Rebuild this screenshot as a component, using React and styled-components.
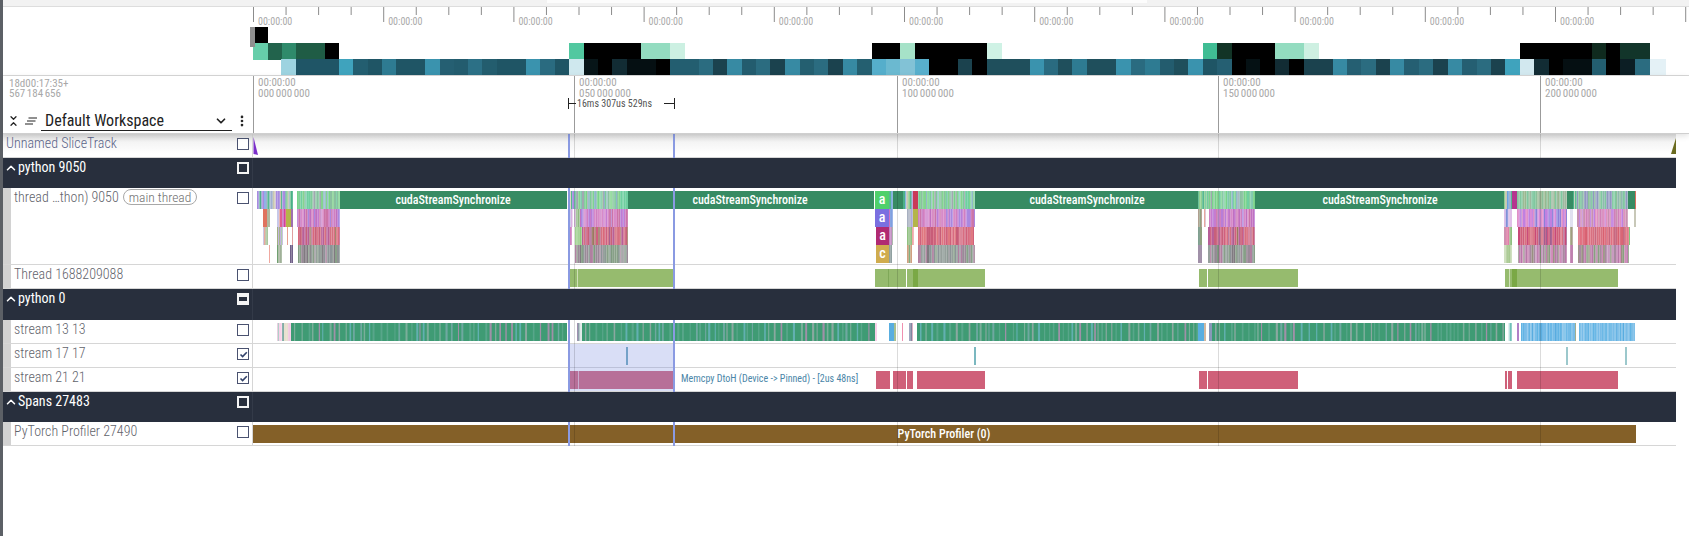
import React from 'react'
import styled, { createGlobalStyle } from 'styled-components'
import { ChevronUp, ChevronDown, MoreVertical } from 'lucide-react'

const GlobalStyle = createGlobalStyle`
  html, body {
    margin: 0;
    padding: 0;
    background: #fff;
    overflow: hidden;
    font-family: Roboto, "Liberation Sans", sans-serif;
    font-stretch: 75%;
  }
`

const LEFT = 253
const RIGHT = 1676
const WIDTH = RIGHT - LEFT

function rng(seed) {
  let s = seed
  return () => {
    s = (s * 16807) % 2147483647
    return s / 2147483647
  }
}

// thin slices, under 2px each, the way a zoomed out flame chart looks
function stripes(x0, x1, palette, seed, y, h) {
  const r = rng(seed * 7919)
  const out = []
  let x = x0
  while (x < x1) {
    const w = Math.min(0.7 + r() * 1.6, x1 - x)
    out.push({ x, w, y, h, fill: palette[Math.floor(r() * palette.length)] })
    x += w
  }
  return out
}

// solid run with thin lighter lines, like the stream tracks
function barcode(x0, x1, base, lines, seed, y, h) {
  const r = rng(seed * 7919)
  const out = [{ x: x0, w: x1 - x0, y, h, fill: base }]
  let x = x0 + 3
  while (x < x1 - 1) {
    out.push({ x, w: 1 + r() * 1.2, y, h, fill: lines[Math.floor(r() * lines.length)] })
    x += 3 + r() * 5
  }
  return out
}

function Rects({ items }) {
  return items.map((s, i) => <rect key={i} x={s.x} y={s.y} width={s.w} height={s.h} fill={s.fill} />)
}

const Page = styled.div`
  display: flex;
  width: 1689px;
  height: 536px;
  overflow: hidden;
`
const LeftEdge = styled.div`
  width: 3px;
  flex: none;
  background: #5c6066;
`
const Main = styled.div`
  flex: 1;
  min-width: 0;
`
const TopBar = styled.div`
  height: 7px;
  display: flex;
  box-sizing: border-box;
  background: #f2f2f2;
  border-bottom: 1px solid #dddddd;
`
const TopTab = styled.div`
  width: 600px;
  height: 3px;
  margin-left: 544px;
  background: #fcfcfc;
`
const Overview = styled.div`
  height: 69px;
  display: flex;
  box-sizing: border-box;
  border-bottom: 1px solid #d8d8d8;
`
const Blank = styled.div`
  width: 250px;
  flex: none;
`
const OverviewBody = styled.div`
  position: relative;
  flex: 1;
  height: 68px;
`
const Handle = styled.div`
  position: absolute;
  left: -3px;
  top: 20px;
  width: 5px;
  height: 20px;
  background: #8f8f8f;
`
const TickLabel = styled.span`
  position: absolute;
  top: 9px;
  left: ${p => p.$x + 5}px;
  color: #aaaaaa;
  font-size: 10px;
  line-height: 12px;
`
const Drawing = styled.svg`
  position: absolute;
  left: 0;
  top: 0;
  display: block;
`

const Header = styled.div`
  display: flex;
  height: 58px;
  box-sizing: border-box;
  border-bottom: 1px solid #cfcfcf;
  box-shadow: 0 2px 6px rgba(0, 0, 0, 0.12);
  position: relative;
  z-index: 3;
  background: #fff;
`
const HeaderLeft = styled.div`
  width: 250px;
  flex: none;
  display: flex;
  flex-direction: column;
  justify-content: space-between;
  box-sizing: border-box;
  padding: 3px 0 2px 6px;
`
const Clock = styled.div`
  color: #a8a8a8;
  font-size: 11px;
  line-height: 10px;
  word-spacing: -1px;
`
const WorkspaceRow = styled.div`
  display: flex;
  align-items: center;
  height: 20px;
`
const ExpandIcon = styled.div`
  width: 10px;
  height: 12px;
  margin-left: -1px;
  display: flex;
  flex-direction: column;
  align-items: center;
  justify-content: center;
  color: #222;
  svg {
    margin: -2px 0;
  }
`
const WorkspaceIcon = styled.svg`
  margin-left: 7px;
  width: 12px;
  height: 8px;
  flex: none;
`
const Select = styled.div`
  display: flex;
  align-items: center;
  justify-content: space-between;
  width: 191px;
  height: 20px;
  margin-left: 4px;
  padding: 0 4px;
  box-sizing: border-box;
  border-bottom: 1px solid #222;
  color: #222;
  font-size: 16px;
`
const Dots = styled.div`
  display: flex;
  margin-left: 3px;
  color: #222;
`
const HeaderBody = styled.div`
  position: relative;
  flex: 1;
  border-left: 1px solid #9b9b9b;
`
const Mark = styled.div`
  position: absolute;
  left: ${p => p.$x - 1}px;
  top: 0;
  bottom: 0;
  width: 1px;
  background: #9b9b9b;
`
const MarkLabel = styled.div`
  position: absolute;
  left: ${p => p.$x + 4}px;
  top: 2px;
  color: #a8a8a8;
  font-size: 11px;
  line-height: 10.5px;
  white-space: pre-line;
  word-spacing: -1px;
`
const Span = styled.div`
  position: absolute;
  left: 314px;
  top: 22px;
  width: 107px;
  height: 11px;
  display: flex;
  align-items: center;
  border-left: 1px solid #222;
  border-right: 1px solid #222;
  box-sizing: border-box;
`
const SpanLine = styled.div`
  height: 1px;
  width: ${p => p.$w}px;
  background: #222;
  flex: none;
`
const SpanText = styled.span`
  color: #555;
  font-size: 10px;
  line-height: 11px;
  flex: 1;
  padding-left: 1px;
  white-space: nowrap;
`

const Tracks = styled.div`
  position: relative;
  width: ${RIGHT - 3}px;
`
const Track = styled.div`
  display: flex;
  height: ${p => p.$h}px;
  box-sizing: border-box;
  border-bottom: 1px solid #d6d6d6;
  ${p => p.$shade && 'background: linear-gradient(#dedede 0, #f4f4f4 8px, #fff 20px);'}
`
const Shell = styled.div`
  width: 250px;
  flex: none;
  display: flex;
  align-items: flex-start;
  box-sizing: border-box;
  padding: 0 3px 0 ${p => (p.$nested ? 11 : 3)}px;
  border-right: 1px solid #d6d6d6;
  background: ${p => (p.$nested
    ? 'linear-gradient(to right, #d2d2d2 8px, #fff 8px)'
    : 'transparent')};
`
const TrackName = styled.span`
  color: ${p => p.$color || '#5f636b'};
  font-size: 14px;
  font-weight: 300;
  line-height: 18px;
  white-space: nowrap;
`
const Chip = styled.span`
  color: #6e6e6e;
  border: 1px solid #a8a8a8;
  border-radius: 9px;
  font-size: 13.5px;
  font-weight: 300;
  line-height: 14px;
  padding: 0 5px;
  margin: 1px 0 0 4px;
  white-space: nowrap;
`
const Check = styled.span`
  margin-left: auto;
  margin-top: 4px;
  width: 12px;
  height: 12px;
  box-sizing: border-box;
  border: 1.5px solid #4a5270;
  background: #fff;
  display: flex;
  align-items: center;
  justify-content: center;
  flex: none;
`
const TrackBody = styled.div`
  position: relative;
  flex: 1;
`
const Group = styled.div`
  display: flex;
  height: ${p => p.$h}px;
  background: #282f3d;
  position: relative;
  z-index: 2;
`
const GroupShell = styled.div`
  width: 250px;
  flex: none;
  display: flex;
  align-items: flex-start;
  box-sizing: border-box;
  padding: 0 3px 0 0.5px;
  border-right: 1px solid #333a48;
  height: 100%;
`
const Caret = styled.span`
  display: flex;
  color: #fff;
  margin-top: 3px;
`
const GroupName = styled.span`
  color: #fff;
  font-size: 14px;
  line-height: 18px;
  margin-left: 0.5px;
  white-space: nowrap;
`
const GroupCheck = styled.span`
  margin-left: auto;
  margin-top: 4px;
  width: 12px;
  height: 12px;
  box-sizing: border-box;
  border: 2px solid #f4f4f4;
  background: ${p => (p.$mixed ? '#f4f4f4' : '#282f3d')};
  display: flex;
  align-items: center;
  justify-content: center;
  flex: none;
`
const Dash = styled.span`
  width: 100%;
  height: 4px;
  background: #282f3d;
`

const Overlay = styled.div`
  position: absolute;
  left: ${LEFT - 3}px;
  top: 0;
  bottom: 0;
  width: ${WIDTH}px;
  z-index: 1;
  pointer-events: none;
`
const GridLine = styled.div`
  position: absolute;
  left: ${p => p.$x - LEFT}px;
  top: 0;
  bottom: 0;
  width: 1px;
  background: rgba(0, 0, 0, 0.14);
`
const SelectLine = styled.div`
  position: absolute;
  left: ${p => p.$x - LEFT}px;
  top: 0;
  bottom: 0;
  width: 2px;
  background: #8a9ae2;
`
const SelectFill = styled.div`
  position: absolute;
  left: 317px;
  width: 103px;
  top: 210px;
  height: 47px;
  background: rgba(130, 146, 225, 0.3);
`
const MemcpyLabel = styled.span`
  position: absolute;
  left: 428px;
  top: 4px;
  color: #4b86a8;
  font-size: 10px;
  line-height: 14px;
  white-space: nowrap;
`

const OV_A = [
  [253, 268, '#66ceaa'], [268, 282, '#22634c'], [282, 296, '#2f8a6b'], [296, 325, '#1f5c45'], [325, 339, '#000'],
  [569, 584, '#52c8a0'], [584, 641, '#000'], [641, 670, '#93dcc0'], [670, 685, '#ccf0e2'],
  [872, 900, '#000'], [900, 915, '#a6e2c8'], [915, 987, '#000'], [987, 1002, '#cff2e5'],
  [1203, 1217, '#40bd94'], [1217, 1232, '#123426'], [1232, 1275, '#000'], [1275, 1304, '#93dcc0'], [1304, 1319, '#cef0e2'],
  [1520, 1592, '#000'], [1592, 1606, '#0f2a1e'], [1606, 1620, '#000'], [1620, 1650, '#12352a'],
]
const OV_B = [
  [281, 296, '#9dd3e0'], [296, 339, '#1f5566'], [339, 353, '#3fa3bd'], [353, 368, '#235e70'], [368, 382, '#1f5565'],
  [382, 396, '#2e7b92'], [396, 425, '#1f5565'], [425, 440, '#3a93ae'], [440, 454, '#255f72'], [454, 468, '#235c6e'],
  [468, 482, '#2c7086'], [482, 497, '#235d6e'], [497, 526, '#1f5565'], [526, 540, '#3a93ae'], [540, 555, '#2a6b80'],
  [555, 569, '#1f5565'], [569, 584, '#cfe8ee'], [584, 598, '#071518'], [598, 612, '#000'], [612, 627, '#122c34'],
  [627, 656, '#050f12'], [656, 670, '#000'], [670, 699, '#235e70'], [699, 713, '#2b6c80'], [713, 727, '#1b424e'],
  [727, 742, '#378aa3'], [742, 756, '#235c6e'], [756, 770, '#2b6c80'], [770, 785, '#1b424e'], [785, 800, '#378aa3'],
  [800, 814, '#245f70'], [814, 828, '#2b6c80'], [828, 843, '#1b424e'], [843, 857, '#378aa3'], [857, 872, '#245f70'],
  [872, 886, '#55aecb'], [886, 900, '#6bb9d0'], [900, 915, '#82c2d6'], [915, 929, '#58afcc'], [929, 958, '#000'],
  [958, 972, '#1b424e'], [972, 987, '#000'], [987, 1030, '#1f4f5c'], [1030, 1044, '#3a93ae'], [1044, 1058, '#2a6b80'],
  [1058, 1072, '#1f4f5c'], [1072, 1087, '#2e7b92'], [1087, 1116, '#1f4f5c'], [1116, 1131, '#3a93ae'], [1131, 1145, '#2a6b80'],
  [1145, 1160, '#2e7b92'], [1160, 1174, '#235c6e'], [1174, 1188, '#1f4f5c'], [1188, 1203, '#3a93ae'], [1203, 1217, '#1f5565'],
  [1217, 1232, '#255f72'], [1232, 1246, '#000'], [1246, 1260, '#051114'], [1260, 1275, '#000'], [1275, 1289, '#122c34'],
  [1289, 1304, '#000'], [1304, 1333, '#1b424e'], [1333, 1347, '#378aa3'], [1347, 1361, '#255f72'], [1361, 1376, '#2b6c80'],
  [1376, 1390, '#1b424e'], [1390, 1404, '#378aa3'], [1404, 1419, '#255f72'], [1419, 1433, '#2b6c80'], [1433, 1448, '#1b424e'],
  [1448, 1462, '#378aa3'], [1462, 1477, '#255f72'], [1477, 1491, '#2b6c80'], [1491, 1505, '#1b424e'], [1505, 1520, '#3fa3bd'],
  [1520, 1534, '#d2e8ef'], [1534, 1549, '#122c34'], [1549, 1563, '#000'], [1563, 1592, '#050f12'], [1592, 1606, '#235e70'],
  [1606, 1620, '#000'], [1620, 1635, '#0c1e24'], [1635, 1650, '#2b6c80'], [1650, 1666, '#e4f1f6'],
]

function OverviewStrip() {
  const ticks = []
  for (let i = 0; i < 45; i++) {
    const x = LEFT + i * 32.55
    ticks.push({ x, long: i % 4 === 0 })
  }
  return (
    <OverviewBody>
      <Drawing width={1436} height={68} viewBox={`${LEFT} 0 1436 68`}>
        {ticks.map((t, i) => (
          <rect key={i} x={t.x} y={0} width={1} height={t.long ? 15 : 8} fill="#8c8c8c" />
        ))}
        {OV_A.map(([a, b, c]) => <rect key={a} x={a} y={36} width={b - a} height={17} fill={c} />)}
        {OV_B.map(([a, b, c]) => <rect key={a} x={a} y={52} width={b - a} height={16} fill={c} />)}
        <rect x={254} y={20} width={14} height={16} fill="#000" />
      </Drawing>
      <Handle />
      {ticks.filter(t => t.long && t.x < 1600).map(t => (
        <TickLabel key={t.x} $x={t.x - LEFT}>00:00:00</TickLabel>
      ))}
    </OverviewBody>
  )
}

const G0 = ['#7fc9ae', '#84d48e', '#6fcfa0', '#8fb8c8', '#7ecb9a', '#a0a8b0', '#78d38a', '#8ac0a0']
const G0b = ['#c8c8b0', '#a78be0', '#4ab088', '#e0d8c8', '#9fb0d0', '#56b890', '#6aa0e0', '#8fd090']
const P1 = ['#c67bd0', '#d07fc0', '#b87ed8', '#d88ac8', '#c070c0', '#a988e0', '#cc74a8']
const R2 = ['#cf5f7f', '#b85f98', '#d9687a', '#a86090', '#c8607a', '#d67080', '#9a7a60']
const K3 = ['#8d9a95', '#96a09c', '#7f9a80', '#9a8a98', '#8c9498', '#88a088', '#807a80', '#b080a0']
const M3 = ['#c080b0', '#a88aa0', '#d08ab8', '#88a080', '#c89ac0', '#989080', '#b878a8']
const LW = ['#c8c8e8', '#e0e0f0', '#a8c8a0', '#e8a8a0', '#d8b0e0', '#90b880', '#fff']

const rowY = [3, 21, 39, 57]

function flameRows() {
  const L = (a, b, pal, lvl, seed) => stripes(a, b, pal, seed, rowY[lvl], 18)
  const solid = (a, b, fill, lvl) => ({ x: a, w: b - a, y: rowY[lvl], h: 18, fill })
  return [
    solid(340, 567, '#378b63', 0), solid(628, 874, '#378b63', 0), solid(893, 903, '#378b63', 0),
    solid(975, 1198, '#378b63', 0), solid(1255, 1504, '#378b63', 0), solid(1567, 1573, '#378b63', 0),
    solid(1628, 1635, '#378b63', 0), solid(1635, 1636, '#d87060', 0),
    ...L(257, 293, G0b, 0, 11), ...L(297, 340, G0, 0, 12),
    ...L(569, 574, G0b, 0, 13), ...L(574, 628, G0, 0, 14),
    ...L(889, 893, G0b, 0, 15), ...L(903, 913, G0b, 0, 16), ...L(918, 975, G0, 0, 17),
    ...L(1198, 1207, G0b, 0, 18), ...L(1207, 1255, G0, 0, 19),
    ...L(1504, 1512, G0b, 0, 20), ...L(1517, 1567, ['#8cc09a', '#98b890', '#80c8a0', '#a0b8a0'], 0, 21),
    ...L(1573, 1577, G0b, 0, 22), ...L(1577, 1628, ['#8cc09a', '#90b8b0', '#80c8a0', '#9098c0'], 0, 23),
    solid(913, 918, '#c93a58', 0), solid(1512, 1517, '#b5368f', 0),

    solid(263, 267, '#e0735f', 1), solid(267, 270, '#b0b8a0', 1), ...L(277, 280, LW, 1, 31),
    ...L(280, 286, ['#d040a0', '#c070c0', '#e06090'], 1, 32), solid(286, 291, '#b4b44a', 1), solid(291, 293, '#a070b0', 1),
    ...L(297, 340, P1, 1, 33), ...L(570, 580, LW, 1, 34), ...L(580, 628, P1, 1, 35),
    ...L(889, 893, ['#d070c0', '#80a0e0'], 1, 36), ...L(902, 904, LW, 1, 37), ...L(907, 913, ['#b0a8d8', '#a8b0c0'], 1, 38),
    solid(913, 918, '#b4b44a', 1), ...L(918, 975, P1, 1, 39),
    ...L(1198, 1202, ['#90a080', '#b0a090'], 1, 40), ...L(1204, 1206, LW, 1, 41), ...L(1209, 1255, P1, 1, 42),
    ...L(1504, 1512, ['#8090d8', '#a0a8e0', '#e0c0e8'], 1, 43), ...L(1517, 1567, ['#d88ad8', '#c080e0', '#e090c8', '#8a80d8'], 1, 44),
    ...L(1570, 1573, LW, 1, 45), ...L(1577, 1628, ['#d080b8', '#c080e0', '#e090c0', '#c890b0'], 1, 46), solid(1634, 1636, '#c8c8b8', 1),

    ...L(263, 268, LW, 2, 51), ...L(277, 283, ['#90c080', '#c0b0e0', '#a0b080'], 2, 52), solid(287, 288, '#e8a090', 2), solid(292, 293, '#e0a0a0', 2),
    ...L(298, 340, R2, 2, 53), ...L(570, 572, ['#d080c0'], 2, 54), ...L(575, 582, ['#90c880', '#a0d090'], 2, 55), ...L(582, 628, R2, 2, 56),
    ...L(889, 893, ['#80c080', '#c080c0'], 2, 57), ...L(907, 912, ['#88b878', '#90c080'], 2, 58), ...L(912, 914, ['#f0a8a8'], 2, 59),
    ...L(918, 974, ['#d0607a', '#d86c80', '#c85c78', '#e07880'], 2, 60),
    ...L(1198, 1202, ['#90a080', '#80a090'], 2, 61), ...L(1208, 1255, R2, 2, 62),
    ...L(1504, 1512, ['#e080a8', '#90c080', '#d090b0'], 2, 63), ...L(1518, 1567, ['#d0607a', '#c84878', '#d87080', '#a06090'], 2, 64),
    ...L(1570, 1573, ['#a0a080', '#b0a098'], 2, 65), ...L(1578, 1629, ['#d86070', '#d87080', '#c86880', '#e07080'], 2, 66),
    solid(1629, 1630, '#80c880', 2),

    solid(269, 270, '#f0a8a0', 3), ...L(277, 282, ['#8fa888', '#a0b098', '#70a070'], 3, 71), ...L(290, 293, ['#8088a8', '#706088'], 3, 72),
    ...L(298, 340, K3, 3, 73), ...L(575, 628, K3, 3, 74),
    ...L(889, 892, ['#d08090', '#90a0a0'], 3, 75), ...L(907, 912, ['#d0a080', '#80b080'], 3, 76), ...L(918, 975, K3, 3, 77),
    ...L(1198, 1202, ['#b080a0', '#a090a8'], 3, 78), ...L(1208, 1255, K3, 3, 79),
    ...L(1504, 1512, ['#a8c890', '#d0e0c0'], 3, 80), ...L(1518, 1567, M3, 3, 81), ...L(1570, 1573, M3, 3, 82), ...L(1578, 1629, M3, 3, 83),
  ]
}

function ChartSvg({ h, children }) {
  return (
    <Drawing width={WIDTH} height={h} viewBox={`${LEFT} 0 ${WIDTH} ${h}`}>
      {children}
    </Drawing>
  )
}

const BarText = styled.text`
  fill: #fff;
  font-family: Roboto, "Liberation Sans", sans-serif;
  font-stretch: 75%;
  font-size: 12px;
  font-weight: 500;
  text-anchor: middle;
`
const BlockText = styled(BarText)`
  font-size: 14px;
`

function ThreadChart() {
  const blocks = [
    [875, 889, 0, '#4fd06b', 'a'],
    [875, 889, 1, '#7a6fe0', 'a'],
    [876, 889, 2, '#b02a72', 'a'],
    [876, 889, 3, '#d0ac4e', 'c'],
  ]
  return (
    <ChartSvg h={77}>
      <Rects items={flameRows()} />
      {[[453, 0], [750, 1], [1087, 2], [1380, 3]].map(([x, k]) => (
        <BarText key={k} x={x} y={16}>cudaStreamSynchronize</BarText>
      ))}
      {blocks.map(([a, b, lvl, c, t]) => (
        <g key={lvl}>
          <rect x={a} y={rowY[lvl]} width={b - a} height={18} fill={c} />
          <BlockText x={(a + b) / 2} y={rowY[lvl] + 13}>{t}</BlockText>
        </g>
      ))}
    </ChartSvg>
  )
}

const cpuGreen = '#96bb6e'
function ThreadGreen() {
  const segs = [[570, 673], [875, 906], [907, 985], [1199, 1207], [1208, 1298], [1505, 1618]]
  const marks = [[913, 918], [1512, 1517]]
  return (
    <ChartSvg h={23}>
      {segs.map(([a, b]) => <rect key={a} x={a} y={4} width={b - a} height={18} fill={cpuGreen} />)}
      {marks.map(([a, b]) => <rect key={a} x={a} y={4} width={b - a} height={18} fill="#7aa845" />)}
      <rect x={577} y={4} width={1} height={18} fill="#cfe0b8" />
      <rect x={888} y={4} width={1} height={18} fill="#7fa858" />
      <rect x={1509} y={4} width={1} height={18} fill="#cfe0b8" />
    </ChartSvg>
  )
}

function Stream13() {
  const lines = ['#6fa8a0', '#8aa8a0', '#a090a8', '#62b0b0', '#58a68a', '#58a68a', '#7aae9a']
  const blue = ['#6bb8e6', '#78bce8', '#62b4e4', '#80c0e8', '#58ace0']
  const rects = [
    ...stripes(277, 291, ['#b0d0c8', '#f0c8e0', '#e8e0d0', '#78a8a0', '#f8d0e8'], 2, 3, 18),
    ...barcode(291, 567, '#3f9b74', lines, 3, 3, 18),
    ...stripes(577, 582, ['#8098a0', '#a090b0', '#e0e8e8'], 4, 3, 18),
    ...barcode(582, 875, '#3f9b74', lines, 5, 3, 18),
    { x: 875, w: 2, y: 3, h: 18, fill: '#f8d0e8' },
    { x: 889, w: 5, y: 3, h: 18, fill: '#59aee0' },
    { x: 894, w: 2, y: 3, h: 18, fill: '#a8c090' },
    { x: 902, w: 1, y: 3, h: 18, fill: '#f090b0' },
    ...stripes(909, 913, ['#8088a0', '#e0a0b8', '#a0a8c0'], 6, 3, 18),
    ...barcode(917, 1198, '#3f9b74', lines, 7, 3, 18),
    { x: 1198, w: 6, y: 3, h: 18, fill: '#59aee0' },
    { x: 1204, w: 2, y: 3, h: 18, fill: '#d0b8a0' },
    { x: 1209, w: 3, y: 3, h: 18, fill: '#8898b8' },
    ...barcode(1212, 1505, '#3f9b74', lines, 8, 3, 18),
    ...stripes(1508, 1512, ['#b0e0d8', '#70c0b8', '#e0f0f0'], 9, 3, 18),
    { x: 1517, w: 2, y: 3, h: 18, fill: '#b080c8' },
    ...stripes(1521, 1575, blue, 10, 3, 18),
    { x: 1575, w: 1, y: 3, h: 18, fill: '#a0b090' },
    ...stripes(1579, 1635, blue, 11, 3, 18),
  ]
  return <ChartSvg h={23}><Rects items={rects} /></ChartSvg>
}

function Stream17() {
  const ticks = [[626, '#6fa8bd'], [974, '#7bb8c0'], [1566, '#9cc8cc'], [1625, '#9cc8cc']]
  return (
    <ChartSvg h={23}>
      {ticks.map(([x, c]) => <rect key={x} x={x} y={3} width={2} height={18} fill={c} />)}
    </ChartSvg>
  )
}

function Stream21() {
  const reds = [[570, 673], [876, 890], [893, 906], [907, 913], [917, 985], [1199, 1207], [1208, 1298], [1505, 1507], [1508, 1512], [1517, 1618]]
  return (
    <ChartSvg h={23}>
      {reds.map(([a, b]) => <rect key={a} x={a} y={3} width={b - a} height={18} fill="#cf6079" />)}
      <rect x={578} y={3} width={1} height={18} fill="#e8b8c8" />
    </ChartSvg>
  )
}

function ProfilerBar() {
  return (
    <ChartSvg h={23}>
      <rect x={253} y={3} width={1383} height={18} fill="#846028" />
      <BarText x={944} y={16}>PyTorch Profiler (0)</BarText>
    </ChartSvg>
  )
}

function UnnamedChart() {
  return (
    <ChartSvg h={24}>
      <polygon points="253.5,3 258,21 253.5,20" fill="#7b2fc9" />
      <polygon points="1671,20 1676,4 1676,20" fill="#6b6b20" />
    </ChartSvg>
  )
}

function CheckMark() {
  return (
    <svg width="9" height="9" viewBox="0 0 9 9">
      <path d="M1.5 4.5 L3.6 6.6 L7.8 2.2" fill="none" stroke="#33436b" strokeWidth="1.6" />
    </svg>
  )
}

function Row({ name, h, nested, shade, checked, chip, color, children }) {
  return (
    <Track $h={h} $shade={shade}>
      <Shell $nested={nested}>
        <TrackName $color={color}>{name}</TrackName>
        {chip && <Chip>{chip}</Chip>}
        <Check>{checked && <CheckMark />}</Check>
      </Shell>
      <TrackBody>{children}</TrackBody>
    </Track>
  )
}

function GroupRow({ name, h, mixed }) {
  return (
    <Group $h={h}>
      <GroupShell>
        <Caret><ChevronUp size={14} strokeWidth={2.6} /></Caret>
        <GroupName>{name}</GroupName>
        <GroupCheck $mixed={mixed}>{mixed && <Dash />}</GroupCheck>
      </GroupShell>
    </Group>
  )
}

const marks = [
  { x: 0, n: '000 000 000' },
  { x: 321, n: '050 000 000' },
  { x: 644, n: '100 000 000' },
  { x: 965, n: '150 000 000' },
  { x: 1287, n: '200 000 000' },
]

export default function App() {
  return (
    <Page>
      <GlobalStyle />
      <LeftEdge />
      <Main>
        <TopBar><TopTab /></TopBar>
        <Overview>
          <Blank />
          <OverviewStrip />
        </Overview>
        <Header>
          <HeaderLeft>
            <Clock>18d00:17:35+<br />567 184 656</Clock>
            <WorkspaceRow>
              <ExpandIcon>
                <ChevronDown size={11} strokeWidth={3} />
                <ChevronUp size={11} strokeWidth={3} />
              </ExpandIcon>
              <WorkspaceIcon viewBox="0 0 12 8">
                <path d="M3.5 1H12M2 4H10.5M0 7H8" stroke="#222" strokeWidth="1.2" fill="none" />
              </WorkspaceIcon>
              <Select>
                Default Workspace
                <ChevronDown size={14} strokeWidth={3} />
              </Select>
              <Dots><MoreVertical size={14} strokeWidth={2.6} /></Dots>
            </WorkspaceRow>
          </HeaderLeft>
          <HeaderBody>
            {marks.map(m => (
              <React.Fragment key={m.n}>
                {m.x > 0 && <Mark $x={m.x} />}
                <MarkLabel $x={m.x}>{`00:00:00\n${m.n}`}</MarkLabel>
              </React.Fragment>
            ))}
            <Span>
              <SpanLine $w={7} />
              <SpanText>16ms 307us 529ns</SpanText>
              <SpanLine $w={10} />
            </Span>
          </HeaderBody>
        </Header>
        <Tracks>
          <Row name="Unnamed SliceTrack" h={24} shade color="#5a6488"><UnnamedChart /></Row>
          <GroupRow name="python 9050" h={30} />
          <Row name="thread …thon) 9050" h={77} nested chip="main thread"><ThreadChart /></Row>
          <Row name="Thread 1688209088" h={24} nested><ThreadGreen /></Row>
          <GroupRow name="python 0" h={31} mixed />
          <Row name="stream 13 13" h={24} nested><Stream13 /></Row>
          <Row name="stream 17 17" h={24} nested checked><Stream17 /></Row>
          <Row name="stream 21 21" h={24} nested checked>
            <Stream21 />
            <MemcpyLabel>Memcpy DtoH (Device -&gt; Pinned) - [2us 48ns]</MemcpyLabel>
          </Row>
          <GroupRow name="Spans 27483" h={30} />
          <Row name="PyTorch Profiler 27490" h={24} nested><ProfilerBar /></Row>
          <Overlay>
            <SelectFill />
            {[574, 897, 1218, 1540].map(x => <GridLine key={x} $x={x} />)}
            <SelectLine $x={568} />
            <SelectLine $x={673} />
          </Overlay>
        </Tracks>
      </Main>
    </Page>
  )
}
